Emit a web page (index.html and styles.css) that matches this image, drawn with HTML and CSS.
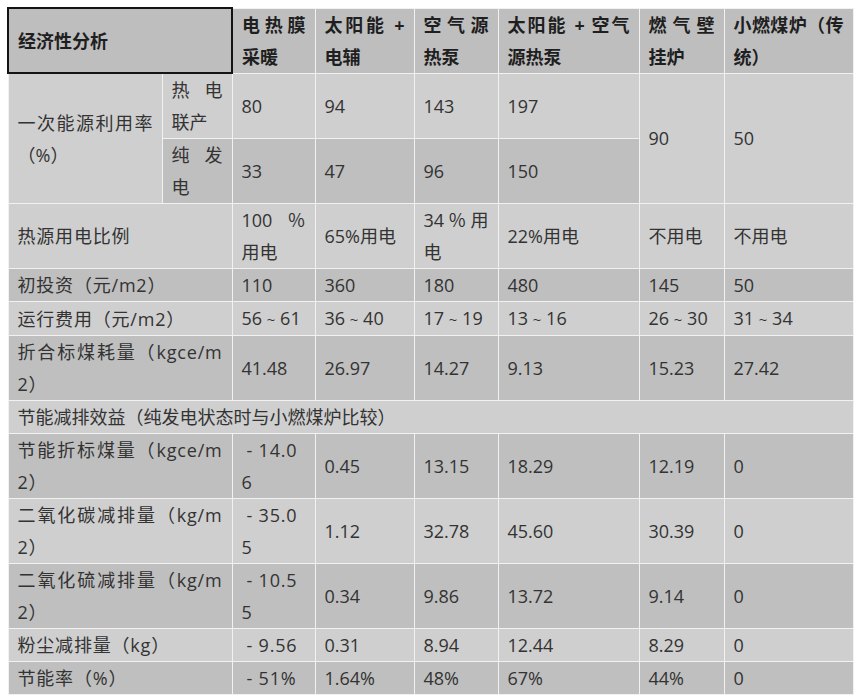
FILE: index.html
```html
<!DOCTYPE html>
<html lang="zh-CN">
<head>
<meta charset="utf-8">
<title>经济性分析</title>
<link rel="stylesheet" href="styles.css">
</head>
<body>
<table class="econ">
  <colgroup>
    <col class="c1"><col class="c2"><col class="c3"><col class="c4"><col class="c5"><col class="c6"><col class="c7"><col class="c8">
  </colgroup>
  <thead>
    <tr class="head">
      <th colspan="2" class="corner">经济性分析</th>
      <th>电热膜采暖</th>
      <th>太阳能 + 电辅</th>
      <th>空气源热泵</th>
      <th>太阳能 + 空气源热泵</th>
      <th>燃气壁挂炉</th>
      <th>小燃煤炉（传统）</th>
    </tr>
  </thead>
  <tbody>
    <tr class="light">
      <td rowspan="2">一次能源利用率（%）</td>
      <td>热电联产</td>
      <td>80</td><td>94</td><td>143</td><td>197</td>
      <td rowspan="2">90</td><td rowspan="2">50</td>
    </tr>
    <tr class="dark">
      <td>纯发电</td>
      <td>33</td><td>47</td><td>96</td><td>150</td>
    </tr>
    <tr class="light">
      <td colspan="2" class="lbl">热源用电比例</td>
      <td>100％用电</td><td>65%用电</td><td>34％用电</td><td>22%用电</td><td>不用电</td><td>不用电</td>
    </tr>
    <tr class="dark">
      <td colspan="2" class="lbl">初投资（元/m2）</td>
      <td>110</td><td>360</td><td>180</td><td>480</td><td>145</td><td>50</td>
    </tr>
    <tr class="light">
      <td colspan="2" class="lbl">运行费用（元/m2）</td>
      <td>56<span class="tilde">~</span>61</td><td>36<span class="tilde">~</span>40</td><td>17<span class="tilde">~</span>19</td><td>13<span class="tilde">~</span>16</td><td>26<span class="tilde">~</span>30</td><td>31<span class="tilde">~</span>34</td>
    </tr>
    <tr class="dark">
      <td colspan="2" class="lbl">折合标煤耗量（kgce/m2）</td>
      <td>41.48</td><td>26.97</td><td>14.27</td><td>9.13</td><td>15.23</td><td>27.42</td>
    </tr>
    <tr class="light">
      <td colspan="8">节能减排效益（纯发电状态时与小燃煤炉比较）</td>
    </tr>
    <tr class="dark">
      <td colspan="2" class="lbl">节能折标煤量（kgce/m2）</td>
      <td class="neg">- 14.06</td><td>0.45</td><td>13.15</td><td>18.29</td><td>12.19</td><td>0</td>
    </tr>
    <tr class="light">
      <td colspan="2" class="lbl">二氧化碳减排量（kg/m2）</td>
      <td class="neg">- 35.05</td><td>1.12</td><td>32.78</td><td>45.60</td><td>30.39</td><td>0</td>
    </tr>
    <tr class="dark">
      <td colspan="2" class="lbl">二氧化硫减排量（kg/m2）</td>
      <td class="neg">- 10.55</td><td>0.34</td><td>9.86</td><td>13.72</td><td>9.14</td><td>0</td>
    </tr>
    <tr class="light">
      <td colspan="2" class="lbl">粉尘减排量（kg）</td>
      <td class="neg">- 9.56</td><td>0.31</td><td>8.94</td><td>12.44</td><td>8.29</td><td>0</td>
    </tr>
    <tr class="dark">
      <td colspan="2" class="lbl">节能率（%）</td>
      <td class="neg">- 51%</td><td>1.64%</td><td>48%</td><td>67%</td><td>44%</td><td>0</td>
    </tr>
  </tbody>
</table>
</body>
</html>
```

FILE: styles.css
```css
html, body {
  margin: 0;
  padding: 0;
  background: #ffffff;
}

body {
  font-family: "Open Sans", "Noto Sans CJK SC", sans-serif;
  font-size: 18px;
  color: #333333;
}

.econ {
  margin: 7px 0 0 7px;
  width: 845px;
  table-layout: fixed;
  border-collapse: collapse;
}

.c1 { width: 154px; }
.c2 { width: 70px; }
.c3 { width: 83px; }
.c4 { width: 99px; }
.c5 { width: 84px; }
.c6 { width: 141px; }
.c7 { width: 85px; }
.c8 { width: 129px; }

.econ th,
.econ td {
  border: 1px solid #f1f1f1;
  padding: 0 9px;
  line-height: 32px;
  text-align: justify;
  word-break: break-all;
  vertical-align: middle;
}

.econ th {
  font-weight: 700;
  color: #1f1f1f;
  background: #bebebe;
}

.econ th.corner {
  border: 2px solid #141414;
}

.light td { background: #cfcfcf; }
.dark td { background: #bfbfbf; }

.econ td.lbl { letter-spacing: 0.8px; }

.econ td.neg {
  text-align: left;
  text-indent: 5px;
  letter-spacing: 0.8px;
}

.tilde {
  display: inline-block;
  width: 18px;
  text-align: center;
  font-size: 15px;
}
```
